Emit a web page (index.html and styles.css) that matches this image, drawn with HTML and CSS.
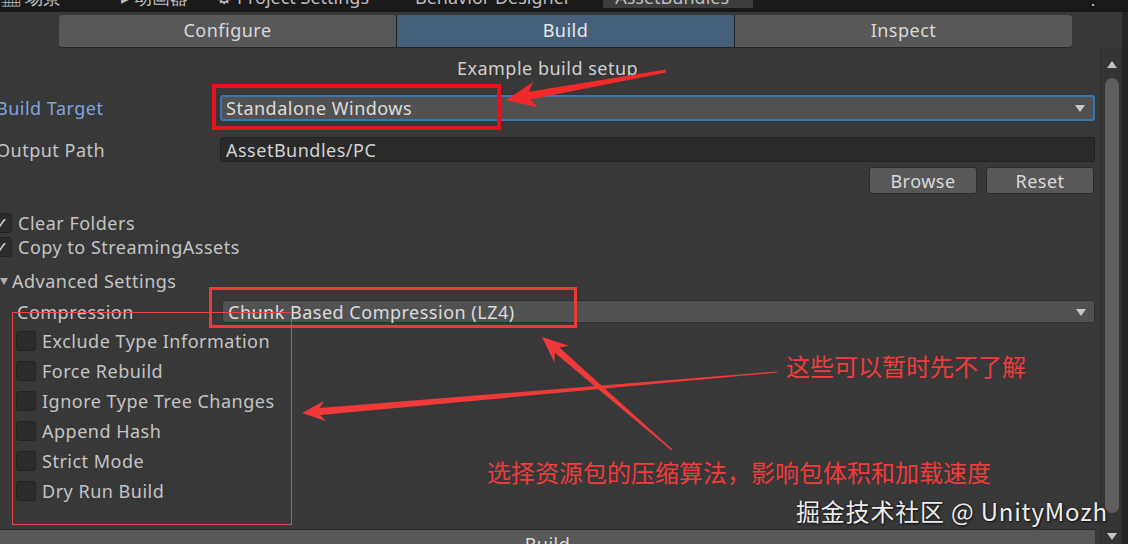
FILE: index.html
```html
<!DOCTYPE html>
<html lang="en">
<head>
    <meta charset="UTF-8">
    <title>AssetBundles</title>
    <link rel="stylesheet" href="styles.css">
</head>
<body>
    <!-- Editor window tabs (cut off at the top) -->
    <div class="window-tabs">
        <span class="wtab tab-scene">&#9638; 场景</span>
        <span class="wtab tab-anim">&#9656; 动画器</span>
        <span class="wtab tab-settings">&#9881; Project Settings</span>
        <span class="wtab tab-bd">Behavior Designer</span>
        <span class="wtab tab-ab">AssetBundles</span>
        <span class="wtab tab-menu">&#8942;</span>
    </div>

    <div class="window">
        <div class="main">
            <div class="toolbar">
                <div class="tb-btn">Configure</div>
                <div class="tb-btn active">Build</div>
                <div class="tb-btn">Inspect</div>
            </div>

            <div class="caption">Example build setup</div>

            <div class="field-row target-row">
                <span class="label focus">Build Target</span>
                <div class="dropdown focused">Standalone Windows<span class="caret"></span></div>
            </div>

            <div class="field-row path-row">
                <span class="label">Output Path</span>
                <div class="text-field">AssetBundles/PC</div>
            </div>

            <div class="button-row">
                <button class="button">Browse</button>
                <button class="button">Reset</button>
            </div>

            <div class="toggles">
                <div class="toggle"><span class="check on">&#10003;</span>Clear Folders</div>
                <div class="toggle"><span class="check on">&#10003;</span>Copy to StreamingAssets</div>
            </div>

            <div class="foldout"><span class="fold-arrow"></span>Advanced Settings</div>

            <div class="field-row compress-row">
                <span class="label indent">Compression</span>
                <div class="dropdown">Chunk Based Compression (LZ4)<span class="caret"></span></div>
            </div>

            <div class="options">
                <div class="option"><span class="check"></span>Exclude Type Information</div>
                <div class="option"><span class="check"></span>Force Rebuild</div>
                <div class="option"><span class="check"></span>Ignore Type Tree Changes</div>
                <div class="option"><span class="check"></span>Append Hash</div>
                <div class="option"><span class="check"></span>Strict Mode</div>
                <div class="option"><span class="check"></span>Dry Run Build</div>
            </div>

            <div class="build-bar">Build</div>
        </div>

        <div class="scrollbar">
            <span class="sb-arrow up"></span>
            <div class="sb-thumb"></div>
            <span class="sb-arrow down"></span>
        </div>
        <div class="edge"></div>
    </div>

    <!-- Red annotations drawn over the screenshot -->
    <svg class="marks" width="1128" height="544" viewBox="0 0 1128 544">
        <rect x="214" y="86" width="285" height="42" fill="none" stroke="#e8121c" stroke-width="4"/>
        <rect x="210.5" y="288.5" width="365" height="38" fill="none" stroke="#ea3a3a" stroke-width="3"/>
        <rect x="12.5" y="312.5" width="279" height="212" fill="none" stroke="#e84444" stroke-width="1"/>
        <polygon fill="#f02a2a" points="666.3,72.5 530.3,99.6 537.8,107.5 506,100 533.2,81.9 528.9,91.8 665.7,69.5"/>
        <polygon fill="#f03a3a" points="777,372.6 320.2,415 325.8,421 302,413 324,401 319.6,408 777,371.4"/>
        <polygon fill="#f03a3a" points="672.4,449.5 559.4,347.5 568.8,345.8 542,337 554.4,362.4 554.8,352.7 671.6,450.5"/>
    </svg>
    <div class="note note-top">这些可以暂时先不了解</div>
    <div class="note note-bottom">选择资源包的压缩算法，影响包体积和加载速度</div>
    <div class="watermark">掘金技术社区 @ UnityMozh</div>
</body>
</html>
```

FILE: styles.css
```css
body {
    margin: 0;
    width: 1128px;
    height: 544px;
    overflow: hidden;
    position: relative;
    background-color: #383838;
    font-family: "Noto Sans", "Open Sans", sans-serif;
    font-size: 18px;
    letter-spacing: 0.5px;
    color: #c4c4c4;
}
.window-tabs {
    height: 12px;
    background-color: #191919;
    overflow: hidden;
    position: relative;
    display: flex;
    white-space: nowrap;
    letter-spacing: 0;
}
.wtab {
    display: block;
    height: 22px;
    line-height: 22px;
    margin-top: -14px;
    color: #bdbdbd;
}
.tab-scene { margin-left: 2px; }
.tab-anim { margin-left: 60px; }
.tab-settings { margin-left: 28px; }
.tab-bd { margin-left: 46px; }
.tab-ab {
    margin-left: 32px;
    padding: 0 24px 0 12px;
    background-color: #3c3c3c;
}
.tab-menu { margin-left: auto; margin-right: 26px; }

.window {
    display: flex;
    height: 532px;
    overflow: hidden;
}
.main {
    flex: 1;
    display: flex;
    flex-direction: column;
    padding-right: 5px;
}
.main > * {
    flex-shrink: 0;
}

/* toolbar */
.toolbar {
    display: flex;
    height: 32px;
    margin: 3px 23px 0 59px;
    background-color: #1f1f1f;
    border-radius: 3px;
    gap: 1px;
    overflow: hidden;
    box-shadow: 0 1px 0 #262626;
}
.tb-btn {
    flex: 1;
    background-color: #585858;
    color: #dadada;
    text-align: center;
    line-height: 31px;
}
.tb-btn.active {
    background-color: #46607c;
    color: #e6e6e6;
}
.caption {
    margin-top: 10px;
    height: 22px;
    line-height: 22px;
    text-align: center;
    color: #cfcfcf;
}

/* rows */
.field-row {
    display: flex;
    align-items: center;
}
.label {
    width: 224px;
    margin-left: -4px;
    flex-shrink: 0;
}
.label.focus { color: #7fa6dc; }
.label.indent { margin-left: 17px; width: 205px; }
.target-row { margin-top: 16px; height: 26px; }
.path-row { margin-top: 16px; height: 25px; }
.compress-row { margin-top: 7px; height: 23px; }

.dropdown {
    flex: 1;
    height: 100%;
    box-sizing: border-box;
    background-color: #515151;
    border: 1px solid #303030;
    border-radius: 3px;
    padding-left: 5px;
    display: flex;
    align-items: center;
    color: #dcdcdc;
    position: relative;
}
.dropdown.focused {
    border: 2px solid #3a76b5;
    padding-left: 4px;
}
.caret {
    position: absolute;
    right: 8px;
    top: 50%;
    margin-top: -3px;
    border-left: 5px solid transparent;
    border-right: 5px solid transparent;
    border-top: 7px solid #c8c8c8;
}
.text-field {
    flex: 1;
    height: 100%;
    box-sizing: border-box;
    background-color: #2a2a2a;
    border: 1px solid #212121;
    border-radius: 3px;
    padding-left: 5px;
    display: flex;
    align-items: center;
    color: #d2d2d2;
}
.button-row {
    display: flex;
    justify-content: flex-end;
    gap: 9px;
    margin-top: 5px;
    padding-right: 1px;
}
.button {
    width: 108px;
    height: 27px;
    background-color: #585858;
    border: 1px solid #2c2c2c;
    border-radius: 3px;
    color: #dadada;
    font-family: inherit;
    font-size: 18px;
    letter-spacing: 0.5px;
    padding: 0;
    line-height: 24px;
}

/* toggles */
.toggles {
    margin-top: 17px;
}
.toggle {
    display: flex;
    align-items: center;
    height: 24px;
}
.toggle .check {
    margin-left: -8px;
    margin-right: 6px;
}
.check {
    width: 20px;
    height: 20px;
    box-sizing: border-box;
    background-color: #2c2c2c;
    border: 1px solid #232323;
    border-radius: 3px;
    flex-shrink: 0;
    font-size: 16px;
    line-height: 18px;
    text-align: center;
    color: #e0e0e0;
}
.foldout {
    margin-top: 10px;
    height: 24px;
    display: flex;
    align-items: center;
}
.fold-arrow {
    width: 0;
    height: 0;
    margin: 0 4px 0 0;
    border-left: 4px solid transparent;
    border-right: 4px solid transparent;
    border-top: 7px solid #b0b0b0;
}
.options {
    margin-top: 3px;
}
.option {
    display: flex;
    align-items: center;
    height: 30px;
    padding-left: 16px;
}
.option .check {
    margin-right: 6px;
}
.build-bar {
    margin-top: 23px;
    height: 26px;
    background-color: #585858;
    border-top: 1px solid #2a2a2a;
    text-align: center;
    line-height: 28px;
    color: #dadada;
}

/* scrollbar */
.scrollbar {
    width: 22px;
    margin-top: 36px;
    background-color: #343434;
    border-left: 1px solid #2f2f2f;
    box-sizing: border-box;
    display: flex;
    flex-direction: column;
    align-items: center;
}
.sb-arrow {
    width: 0;
    height: 0;
    border-left: 5px solid transparent;
    border-right: 5px solid transparent;
}
.sb-arrow.up {
    margin-top: 13px;
    border-bottom: 7px solid #c4c4c4;
}
.sb-arrow.down {
    margin-top: 20px;
    border-top: 7px solid #c4c4c4;
}
.sb-thumb {
    width: 14px;
    height: 435px;
    margin-top: 10px;
    background-color: #5e5e5e;
    border-radius: 7px;
}
.edge {
    width: 6px;
    background-color: #262626;
}

/* annotations */
.marks {
    position: absolute;
    left: 0;
    top: 0;
    pointer-events: none;
}
.note {
    position: absolute;
    font-family: "Noto Sans CJK SC", sans-serif;
    font-size: 24px;
    line-height: 30px;
    letter-spacing: 0;
    color: #f03c3c;
    white-space: nowrap;
}
.note-top { left: 786px; top: 351px; }
.note-bottom { left: 487px; top: 457px; }
.watermark {
    position: absolute;
    left: 796px;
    top: 495px;
    font-family: "Noto Sans CJK SC", sans-serif;
    font-size: 24px;
    line-height: 32px;
    letter-spacing: 0.8px;
    color: #ececec;
    text-shadow: 1px 1px 2px #111, 0 0 2px #222;
    white-space: nowrap;
}
```
